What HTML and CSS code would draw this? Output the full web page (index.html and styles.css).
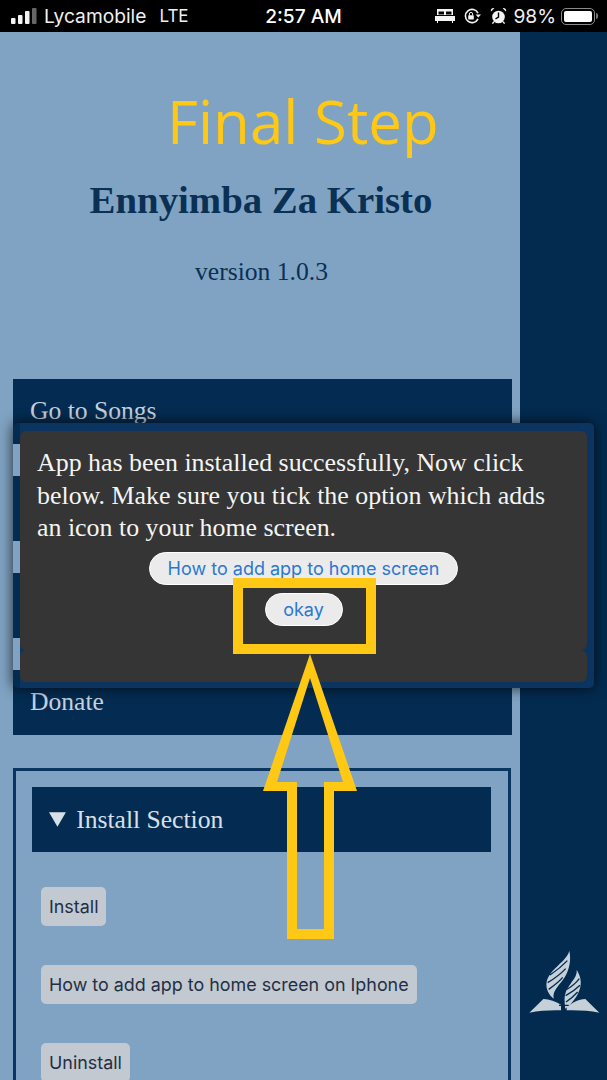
FILE: index.html
```html
<!DOCTYPE html>
<html lang="en">
<head>
  <meta charset="UTF-8">
  <meta name="viewport" content="width=device-width, initial-scale=1.0">
  <title>Ennyimba Za Kristo</title>
  <link rel="stylesheet" href="styles.css">
</head>
<body>
  <div class="statusbar">
    <div class="status-left">
      <svg class="signal" width="26" height="16" viewBox="0 0 26 16">
        <rect x="0" y="10" width="4.5" height="6" rx="1" fill="#f4f4f4"/>
        <rect x="7" y="7" width="4.5" height="9" rx="1" fill="#f4f4f4"/>
        <rect x="14" y="3" width="4.5" height="13" rx="1" fill="#f4f4f4"/>
        <rect x="21" y="0" width="4.5" height="16" rx="1" fill="#666"/>
      </svg>
      <span class="carrier">Lycamobile</span>
      <span class="network">LTE</span>
    </div>
    <div class="status-time">2:57 AM</div>
    <div class="status-right">
      <svg width="20" height="14" viewBox="0 0 20 14">
        <path d="M2 0h16v6H2z" fill="#f4f4f4"/>
        <path d="M3.5 2.6h5.5v3H3.5zM11 2.6h5.5v3H11z" fill="#000"/>
        <path d="M0 7h20v5H18v2h-1v-2H3v2H2v-2H0z" fill="#f4f4f4"/>
      </svg>
      <svg width="19" height="16" viewBox="0 0 19 16">
        <path d="M15 5.2A6.6 6.6 0 1 0 15 10.8" fill="none" stroke="#f4f4f4" stroke-width="1.6"/>
        <path d="M12.6 6.4h5.4L15.3 9.6z" fill="#f4f4f4"/>
        <rect x="5.2" y="7.2" width="5.6" height="4.2" rx=".6" fill="#f4f4f4"/>
        <path d="M6.4 7.4V6a1.6 1.6 0 0 1 3.2 0v1.4" fill="none" stroke="#f4f4f4" stroke-width="1"/>
      </svg>
      <svg width="17" height="18" viewBox="0 0 17 18">
        <circle cx="8.5" cy="10" r="6.3" fill="#f4f4f4"/>
        <path d="M8.5 5.6v4.6l-3 1.6" fill="none" stroke="#000" stroke-width="1.4"/>
        <path d="M1 4.6 4.4 1.2A2.6 2.6 0 0 0 1 4.6zM16 4.6 12.6 1.2A2.6 2.6 0 0 1 16 4.6z" fill="#f4f4f4"/>
        <path d="M4 14.6l-1.6 2M13 14.6l1.6 2" stroke="#f4f4f4" stroke-width="1.5"/>
      </svg>
      <span class="percent">98%</span>
      <div class="battery"><div class="battery-level"></div></div>
      <div class="battery-nub"></div>
    </div>
  </div>

  <div class="page">
    <div class="main">
      <h1 class="title">Final Step</h1>
      <h2 class="app-name">Ennyimba Za Kristo</h2>
      <p class="version">version 1.0.3</p>

      <div class="menu">
        <div class="menu-item">Go to Songs</div>
        <div class="menu-item"></div>
        <div class="menu-item"></div>
        <div class="menu-item">Donate</div>
      </div>

      <details class="install" open>
        <summary>Install Section</summary>
        <div class="install-list">
          <button class="install-btn">Install</button>
          <button class="install-btn">How to add app to home screen on Iphone</button>
          <button class="install-btn">Uninstall</button>
        </div>
      </details>
    </div>

    <div class="sidebar">
      <svg class="logo" width="87" height="100" viewBox="30 0 261 300">
        <path d="M178 62C170 95 120 115 110 155C106 178 118 195 131 206C126 180 150 165 165 140C178 118 184 90 178 62Z" fill="#c6d0d9"/>
        <path d="M200 120C204 145 170 165 165 195C162 212 165 228 166 236C185 222 208 195 212 165C214 148 208 132 200 120Z" fill="#c6d0d9"/>
        <path d="M120 135C135 125 155 110 172 92M113 158C130 148 152 132 167 116M116 178C130 168 148 155 158 142M170 178C182 172 197 160 208 146M167 197C180 190 198 178 210 166M168 216C180 208 192 198 203 186" fill="none" stroke="#032b50" stroke-width="4"/>
        <path d="M58 248L100 207C118 208 138 214 153 224V241C122 240 88 242 58 248Z" fill="#c6d0d9"/>
        <path d="M268 248L226 207C205 208 186 218 170 232V241C204 240 238 242 268 248Z" fill="#c6d0d9"/>
        <path d="M161 212V245M147 226H176" stroke="#032b50" stroke-width="3.5"/>
      </svg>
    </div>
  </div>

  <div class="dialog">
    <div class="dialog-body">
      <p class="dialog-text">App has been installed successfully, Now click below. Make sure you tick the option which adds an icon to your home screen.</p>
      <button class="pill pill-wide">How to add app to home screen</button>
      <button class="pill pill-okay">okay</button>
    </div>
    <div class="dialog-foot"></div>
  </div>

  <svg class="annotation" width="607" height="1080" viewBox="0 0 607 1080">
    <path fill-rule="evenodd" fill="#fec815" d="M233 578H376V654H233ZM243 588V644H366V588Z"/>
    <path fill-rule="evenodd" fill="#fec815" d="M310 654L357 791H334V939H287V791H263ZM310 678L277 782H297V929H324V782H343Z"/>
  </svg>
</body>
</html>
```

FILE: styles.css
```css
body {
  margin: 0;
  width: 607px;
  height: 1080px;
  overflow: hidden;
  position: relative;
  font-family: "Liberation Serif", serif;
  background-color: #80a3c3;
}

.statusbar {
  display: grid;
  grid-template-columns: 1fr auto 1fr;
  align-items: center;
  height: 32px;
  background: #000;
  color: #f0f0f0;
  font-family: Inter, sans-serif;
  font-size: 19.2px;
}

.status-left {
  display: flex;
  align-items: center;
  padding-left: 11px;
}

.signal {
  margin-right: 7px;
}

.network {
  margin-left: 13px;
  font-size: 17px;
}

.status-time {
  font-weight: 500;
  color: #fff;
}

.status-right {
  display: flex;
  align-items: center;
  justify-content: flex-end;
  gap: 8px;
  padding-right: 9px;
}

.percent {
  margin: 0 -3px 0 -2px;
}

.battery {
  box-sizing: border-box;
  width: 34px;
  height: 17px;
  padding: 2px;
  border: 1.5px solid #8a8a8a;
  border-radius: 5px;
}

.battery-level {
  height: 100%;
  background: #fff;
  border-radius: 2px;
}

.battery-nub {
  width: 2px;
  height: 6px;
  margin-left: -7px;
  background: #777;
  border-radius: 0 2px 2px 0;
}

.page {
  display: flex;
  height: 1048px;
  overflow: hidden;
}

.main {
  width: 520px;
  flex-shrink: 0;
}

.sidebar {
  flex: 1;
  display: flex;
  align-items: flex-end;
  padding-bottom: 50px;
  background: #032b50;
}

.title {
  margin: 0;
  padding: 46px 0 0 167px;
  font-family: "Open Sans", sans-serif;
  font-size: 60px;
  font-weight: 400;
  line-height: 86px;
  white-space: nowrap;
  color: #fec815;
}

.app-name {
  margin: 14px 0 0;
  padding-left: 2px;
  text-align: center;
  font-size: 38.8px;
  line-height: 44px;
  color: #0a3054;
}

.version {
  margin: 36px 0 0;
  padding-left: 3px;
  text-align: center;
  font-size: 25.6px;
  line-height: 28px;
  color: #0a3054;
}

.menu {
  display: flex;
  flex-direction: column;
  gap: 32px;
  width: 499px;
  margin: 93px 0 0 13px;
}

.menu-item {
  box-sizing: border-box;
  height: 65px;
  padding: 17px 17px 0;
  font-size: 25.6px;
  line-height: 29px;
  color: #c6d2dd;
  background: #042c52;
}

.install {
  box-sizing: border-box;
  width: 498px;
  margin: 33px 0 0 13px;
  padding: 16px 17px 16px 16px;
  border: 3px solid #0a3560;
}

.install summary {
  height: 65px;
  padding-left: 17px;
  font-size: 25.6px;
  line-height: 65px;
  color: #d8e0e7;
  background: #042c52;
}

.install-list {
  display: flex;
  flex-direction: column;
  align-items: flex-start;
  gap: 39px;
  margin: 35px 0 0 9px;
}

.install-btn {
  height: 39px;
  padding: 0 8px;
  border: none;
  border-radius: 5px;
  font-family: Inter, sans-serif;
  font-size: 17.9px;
  color: #1f2f45;
  background: #c3c9d0;
}

.dialog {
  position: absolute;
  left: 13px;
  top: 423px;
  box-sizing: border-box;
  width: 581px;
  height: 265px;
  padding: 8px 7px 6px;
  border-radius: 5px;
  background: linear-gradient(to right, transparent 7px, #0b3560 7px);
  box-shadow: 0 0 14px rgba(0, 0, 0, 0.75);
}

.dialog-body {
  box-sizing: border-box;
  display: flex;
  flex-direction: column;
  align-items: center;
  height: 219px;
  padding: 16px 17px 0;
  background: #353535;
  border-radius: 6px;
}

.dialog-foot {
  height: 32px;
  background: #353535;
  border-radius: 6px;
}

.dialog-text {
  align-self: flex-start;
  width: 510px;
  margin: 0 0 7px;
  font-size: 25.9px;
  line-height: 32.5px;
  color: #f4f4f4;
}

.pill {
  box-sizing: border-box;
  height: 33px;
  padding: 0;
  border: 1.5px solid #fff;
  border-radius: 17px;
  font-family: Inter, sans-serif;
  font-size: 18px;
  color: #2b78d4;
  background: #ebebeb;
}

.pill-wide {
  width: 309px;
}

.pill-okay {
  width: 78px;
  margin-top: 8px;
}

.annotation {
  position: absolute;
  left: 0;
  top: 0;
}
```
